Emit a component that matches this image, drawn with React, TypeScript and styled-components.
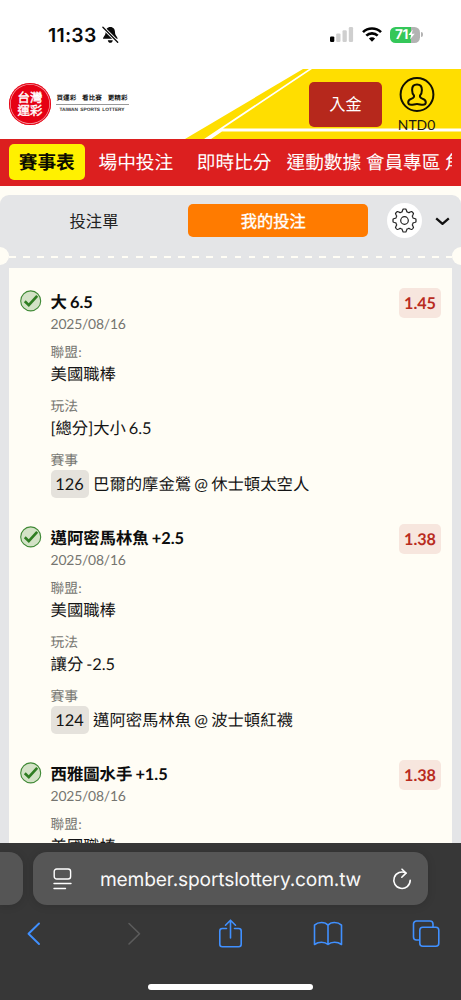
import React from "react";
import styled, { createGlobalStyle, css } from "styled-components";

const latin = `Lato, "Noto Sans CJK TC", sans-serif`;
const system = `Inter, "Noto Sans CJK TC", sans-serif`;

const GlobalStyle = createGlobalStyle`
  * { box-sizing: border-box; }
  html, body { margin: 0; padding: 0; background: #fff; }
  body { font-family: ${latin}; color: #111; overflow: hidden; text-rendering: geometricPrecision; }
  button { border: 0; padding: 0; margin: 0; background: none; font: inherit; color: inherit; }
  svg { display: block; flex: none; }
`;

const Screen = styled.div`
  width: 461px;
  height: 1000px;
  display: flex;
  flex-direction: column;
  overflow: hidden;
  background: #fffdf5;
`;

const StatusBar = styled.div`
  flex: none;
  height: 69px;
  display: flex;
  align-items: center;
  justify-content: space-between;
  padding: 0 38px 0 48px;
  background: #fff;
  font-family: ${system};
`;

const StatusGroup = styled.div<{ $gap: number }>`
  display: flex;
  align-items: center;
  gap: ${(p) => p.$gap}px;
`;

const Clock = styled.span`
  width: 50px;
  font-size: 19.4px;
  font-weight: 600;
  letter-spacing: 0.25px;
  line-height: 24px;
  white-space: nowrap;
  color: #0a0a0a;
`;

const Battery = styled.div`
  display: flex;
  align-items: center;
  gap: 1px;
`;

const BatteryBody = styled.div`
  width: 30px;
  height: 16px;
  border-radius: 5.5px;
  background: linear-gradient(90deg, #34c759 71%, #b3b3b3 71%);
  display: flex;
  align-items: center;
  justify-content: center;
  color: #fff;
  font-size: 13.5px;
  font-weight: 700;
  letter-spacing: -0.4px;
  line-height: 16px;
`;

const BatteryTip = styled.div`
  width: 2px;
  height: 5px;
  border-radius: 0 2px 2px 0;
  background: #b3b3b3;
`;

const Header = styled.header`
  position: relative;
  flex: none;
  height: 69.5px;
  display: flex;
  justify-content: space-between;
  padding: 0 26px 0 9px;
  background: #fff;
`;

const HeaderArt = styled.svg`
  position: absolute;
  inset: 0;
`;

const Brand = styled.div`
  position: relative;
  display: flex;
  align-items: center;
  gap: 4.5px;
`;

const Seal = styled.div`
  width: 42px;
  height: 42px;
  border-radius: 50%;
  background: #e60013;
  box-shadow: inset 0 0 0 1px #e60013, inset 0 0 0 1.7px #f6a0a6;
  color: #fff;
  display: grid;
  place-content: center;
  font-weight: 400;
  font-size: 12.4px;
  line-height: 12.6px;
  text-align: center;
  font-family: "Noto Sans CJK TC", sans-serif;
  -webkit-text-stroke: 0.4px #fff;
`;

const BrandText = styled.div`
  width: 73px;
  display: flex;
  flex-direction: column;
`;

const Slogan = styled.div`
  display: flex;
  justify-content: space-between;
  padding: 0 1px;
  font: 700 6.6px/9px "Noto Sans CJK TC", sans-serif;
  color: #111;
  height: 11.5px;
  border-bottom: 1px solid #999;
`;

const BrandEnglish = styled.div`
  padding-top: 1px;
  text-align: center;
  font: 700 4.8px/9px "Liberation Sans", sans-serif;
  white-space: nowrap;
  word-spacing: 1px;
  color: #333;
`;

const Account = styled.div`
  position: relative;
  display: flex;
  gap: 16px;
`;

const DepositButton = styled.button`
  width: 73px;
  height: 45px;
  margin-top: 12.5px;
  border-radius: 5px;
  background: #b6281c;
  color: #fff;
  font-size: 16.2px;
  font-weight: 400;
  line-height: 44px;
`;

const Profile = styled.div`
  width: 37px;
  display: flex;
  flex-direction: column;
  align-items: center;
  padding-top: 8px;
`;

const Balance = styled.span`
  margin-top: 3px;
  font-size: 13.9px;
  line-height: 18px;
  color: #1c1a10;
`;

const Nav = styled.nav`
  flex: none;
  height: 47px;
  display: flex;
  align-items: center;
  padding: 0 9px;
  background: #dc1f1f;
  overflow: hidden;
`;

const NavStrip = styled.div`
  display: flex;
  align-items: center;
  overflow: hidden;
  width: 100%;
`;

const NavItem = styled.a<{ $active?: boolean; $before?: number }>`
  flex: none;
  margin-left: ${(p) => p.$before ?? 0}px;
  color: #fff;
  font-size: 18.7px;
  font-weight: 400;
  line-height: 36px;
  white-space: nowrap;
  ${(p) =>
    p.$active &&
    css`
      width: 75.5px;
      text-align: center;
      border-radius: 5px;
      background: #fff100;
      color: #0c0c00;
      font-weight: 700;
    `}
`;

const Panel = styled.section`
  flex: 1;
  min-height: 0;
  margin-top: 9.5px;
  display: flex;
  flex-direction: column;
  border-radius: 9px 9px 0 0;
  background: #e4e5e7;
`;

const TabRow = styled.div`
  flex: none;
  height: 51px;
  display: flex;
  align-items: center;
`;

const Tab = styled.button<{ $active?: boolean }>`
  width: ${(p) => (p.$active ? 179.5 : 188)}px;
  height: 33px;
  border-radius: 5px;
  font-size: 16.3px;
  line-height: 32px;
  ${(p) =>
    p.$active
      ? css`
          padding-right: 9px;
          background: #ff7b00;
          color: #fff;
          -webkit-text-stroke: 0.35px #fff;
        `
      : css`
          color: #222;
        `}
`;

const SettingsButton = styled.button`
  width: 35px;
  height: 35px;
  margin-left: 19.5px;
  border-radius: 50%;
  background: #fff;
  display: grid;
  place-items: center;
`;

const CollapseButton = styled.button`
  margin-left: 13px;
  padding-top: 2px;
`;

const Perforation = styled.div`
  flex: none;
  height: 20px;
  display: flex;
  align-items: center;
  justify-content: space-between;
`;

const Notch = styled.div<{ $side: "left" | "right" }>`
  width: 9.3px;
  height: 18.6px;
  background: #fffdf5;
  border-radius: ${(p) => (p.$side === "left" ? "0 10px 10px 0" : "10px 0 0 10px")};
`;

const Dashes = styled.div`
  flex: 1;
  height: 2px;
  margin-top: 1px;
  background: repeating-linear-gradient(90deg, #fffdf5 0 6.6px, transparent 6.6px 14.1px);
`;

const BetList = styled.div`
  flex: 1;
  min-height: 0;
  margin: 2px 9.3px 0;
  padding-top: 22px;
  background: #fffdf5;
  overflow: hidden;
`;

const Bet = styled.article`
  height: 236px;
  display: flex;
  padding: 0 10.7px;
`;

const StatusMark = styled.div`
  width: 30.6px;
`;

const BetBody = styled.div`
  flex: 1;
  min-width: 0;
`;

const BetTitle = styled.div`
  font-size: 16.4px;
  font-weight: 700;
  letter-spacing: -0.05px;
  word-spacing: -0.8px;
  line-height: 25px;
  color: #0d0d0d;
`;

const BetDate = styled.div`
  margin-bottom: 9.5px;
  font-size: 13.9px;
  letter-spacing: -0.2px;
  line-height: 17.5px;
  color: #757570;
`;

const Field = styled.div`
  margin-bottom: 9px;
`;

const Label = styled.div`
  font-size: 13.8px;
  line-height: 19px;
  color: #777772;
`;

const Value = styled.div`
  height: 26px;
  font-size: 16.35px;
  line-height: 27px;
  word-spacing: -1.2px;
  letter-spacing: -0.03px;
  color: #141414;
  white-space: nowrap;
`;

const MatchLine = styled.div`
  display: flex;
  align-items: center;
  gap: 4.5px;
  margin-top: 0.5px;
  height: 28px;
  font-size: 16.35px;
  line-height: 28px;
  word-spacing: -1px;
  color: #141414;
  white-space: nowrap;
`;

const MatchNumber = styled.span`
  width: 38px;
  height: 28px;
  padding-top: 1px;
  border-radius: 5px;
  background: #e5e2dc;
  text-align: center;
`;

const Teams = styled.span`
  padding-top: 2px;
`;

const Odds = styled.div`
  width: 42px;
  height: 29.5px;
  margin-top: -2px;
  border-radius: 5px;
  background: #f7e6de;
  color: #b92b20;
  font-size: 16.2px;
  font-weight: 700;
  line-height: 31px;
  text-align: center;
`;

const BrowserChrome = styled.footer`
  flex: none;
  height: 157px;
  display: flex;
  flex-direction: column;
  align-items: center;
  padding-top: 9px;
  background: #373737;
`;

const AddressRow = styled.div`
  width: 100%;
  display: flex;
  gap: 10px;
`;

const PreviousTab = styled.div`
  width: 23px;
  height: 53px;
  border-radius: 0 14px 14px 0;
  background: #555;
  box-shadow: 0 1px 9px rgba(0, 0, 0, 0.13);
`;

const AddressBar = styled.div`
  width: 395px;
  height: 53px;
  display: flex;
  align-items: center;
  justify-content: space-between;
  padding: 0 16px 0 20px;
  border-radius: 14px;
  background: #565656;
  box-shadow: 0 1px 9px rgba(0, 0, 0, 0.13);
  color: #fff;
`;

const Address = styled.span`
  padding-right: 3px;
  font: 400 19.2px/26px ${system};
  letter-spacing: -0.17px;
  color: #f8f8f8;
  white-space: nowrap;
`;

const Toolbar = styled.div`
  width: 100%;
  height: 58px;
  padding: 0 21px 0 20px;
  display: flex;
  align-items: center;
  justify-content: space-between;
`;

const HomeIndicator = styled.div`
  width: 165px;
  height: 6px;
  margin-top: 21px;
  border-radius: 3px;
  background: #fff;
`;

const MutedBell = () => (
  <svg width="17" height="18" viewBox="0 0 17 18">
    <path d="M8.3 1C5.2 1 3.6 3.3 3.6 6.2 3.6 9.7 1 10.7 1 12.8h14.7c0-2.1-2.7-3.1-2.7-6.6C13 3.3 11.5 1 8.3 1Z" fill="#0a0a0a" />
    <path d="M5.8 14.2h5c-.4 1.8-1.3 2.6-2.5 2.6s-2.1-.8-2.5-2.6Z" fill="#0a0a0a" />
    <path d="m.9 1.3 14.8 14.9" stroke="#fff" strokeWidth="3.2" />
    <path d="m.9 1.3 14.8 14.9" stroke="#0a0a0a" strokeWidth="1.3" strokeLinecap="round" />
  </svg>
);

const Signal = () => (
  <svg width="24" height="16" viewBox="0 0 24 16">
    <rect x="0" y="9.4" width="4.3" height="5.6" rx="1.2" fill="#000" />
    <rect x="6.2" y="6.4" width="4.3" height="8.6" rx="1.2" fill="#cfcfcf" />
    <rect x="12.5" y="3.2" width="4.3" height="11.8" rx="1.2" fill="#cfcfcf" />
    <rect x="18.8" y="0" width="4.3" height="15" rx="1.2" fill="#cfcfcf" />
  </svg>
);

const Wifi = () => (
  <svg width="20" height="15" viewBox="0 0 20 15" fill="none" stroke="#000" strokeWidth="2.6">
    <path d="M1 5.2a12.8 12.8 0 0 1 18 0" />
    <path d="M4.3 8.7a8.1 8.1 0 0 1 11.4 0" />
    <path d="M10 14.8 6.9 11.6a4.4 4.4 0 0 1 6.2 0Z" fill="#000" stroke="none" />
  </svg>
);

const Bolt = () => (
  <svg width="7" height="11" viewBox="0 0 7 11">
    <path d="M4.8.5.4 6.1h2.7L2 10.5l4.7-5.7H3.8Z" fill="#fff" />
  </svg>
);

const ProfileIcon = () => (
  <svg width="36" height="36" viewBox="0 0 36 36" fill="none" stroke="#111000" strokeWidth="2">
    <circle cx="18" cy="17.5" r="16.4" />
    <path
      d="M18 7.600c-3.400 0-4.900 2.400-4.900 5.300 0 2.500.6 4.300 1.900 5.600.4 1.900-.5 2.500-2.300 3.100-2.300.8-3.500 1.700-3.500 3.600 0 1.800 1.300 2.600 3 2.600 2.200 0 3.500-.8 5.800-.8s3.600.8 5.800.8c1.700 0 3-.8 3-2.600 0-1.900-1.200-2.800-3.500-3.600-1.800-.6-2.700-1.200-2.300-3.100 1.300-1.300 1.900-3.100 1.900-5.600 0-2.900-1.500-5.300-4.900-5.300Z"
      strokeLinejoin="round"
    />
  </svg>
);

const gearPath = (() => {
  const points: string[] = [];
  const steps = 160;
  for (let i = 0; i < steps; i++) {
    const angle = (i / steps) * Math.PI * 2;
    const wave = Math.max(-1, Math.min(1, 1.65 * Math.cos(angle * 8)));
    const r = 10.2 + 1.3 * wave;
    points.push(`${(12.5 + r * Math.sin(angle)).toFixed(2)} ${(12.5 - r * Math.cos(angle)).toFixed(2)}`);
  }
  return `M${points.join("L")}Z`;
})();

const Gear = () => (
  <svg width="25" height="25" viewBox="0 0 25 25" fill="none" stroke="#222" strokeWidth="1.2" strokeLinejoin="round">
    <path d={gearPath} />
    <circle cx="12.5" cy="12.5" r="3.8" />
  </svg>
);

const WonIcon = () => (
  <svg width="22" height="22" viewBox="0 0 22 22" fill="none">
    <circle cx="10.7" cy="10.9" r="10" fill="#d3e2c6" stroke="#3f8935" strokeWidth="1.1" />
    <path d="m4.800 11.200 4 3.900 8.400-9.200" stroke="#2f7d22" strokeWidth="2.700" />
  </svg>
);

const bets = [
  { title: "大 6.5", odds: "1.45", play: "[總分]大小 6.5", no: "126", match: "巴爾的摩金鶯 @ 休士頓太空人" },
  { title: "邁阿密馬林魚 +2.5", odds: "1.38", play: "讓分 -2.5", no: "124", match: "邁阿密馬林魚 @ 波士頓紅襪" },
  { title: "西雅圖水手 +1.5", odds: "1.38", play: "", no: "", match: "" },
];

const toolStroke = {
  fill: "none",
  stroke: "#4090ff",
  strokeWidth: 1.6,
  strokeLinecap: "round" as const,
  strokeLinejoin: "round" as const,
};

export default function App() {
  return (
    <Screen>
      <GlobalStyle />
      <StatusBar>
        <StatusGroup $gap={4}>
          <Clock>11:33</Clock>
          <MutedBell />
        </StatusGroup>
        <StatusGroup $gap={8}>
          <Signal />
          <Wifi />
          <Battery>
            <BatteryBody>
              71
              <Bolt />
            </BatteryBody>
            <BatteryTip />
          </Battery>
        </StatusGroup>
      </StatusBar>

      <Header>
        <HeaderArt width="461" height="70" viewBox="0 0 461 70">
          <path d="M185 70 303 0H461V70Z" fill="#ffde00" />
          <path d="M204 70 309 0h3L223 59.500H461V62.600H222L211 70Z" fill="#fff" />
        </HeaderArt>
        <Brand>
          <Seal>
            <span>台灣</span>
            <span>運彩</span>
          </Seal>
          <BrandText>
            <Slogan>
              <span>買運彩</span>
              <span>看比賽</span>
              <span>更精彩</span>
            </Slogan>
            <BrandEnglish>TAIWAN SPORTS LOTTERY</BrandEnglish>
          </BrandText>
        </Brand>
        <Account>
          <DepositButton>入金</DepositButton>
          <Profile>
            <ProfileIcon />
            <Balance>NTD0</Balance>
          </Profile>
        </Account>
      </Header>

      <Nav>
        <NavStrip>
          <NavItem $active>賽事表</NavItem>
          <NavItem $before={14}>場中投注</NavItem>
          <NavItem $before={23.5}>即時比分</NavItem>
          <NavItem $before={15}>運動數據</NavItem>
          <NavItem $before={4.5}>會員專區</NavItem>
          <NavItem $before={4.5}>角</NavItem>
        </NavStrip>
      </Nav>

      <Panel>
        <TabRow>
          <Tab>投注單</Tab>
          <Tab $active>我的投注</Tab>
          <SettingsButton>
            <Gear />
          </SettingsButton>
          <CollapseButton>
            <svg width="15" height="9" viewBox="0 0 15 9" fill="none" stroke="#111" strokeWidth="2.300" strokeLinejoin="round">
              <path d="m1.200 1.300 6.300 5.500 6.300-5.500" />
            </svg>
          </CollapseButton>
        </TabRow>
        <Perforation>
          <Notch $side="left" />
          <Dashes />
          <Notch $side="right" />
        </Perforation>
        <BetList>
          {bets.map((bet) => (
            <Bet key={bet.title}>
              <StatusMark>
                <WonIcon />
              </StatusMark>
              <BetBody>
                <BetTitle>{bet.title}</BetTitle>
                <BetDate>2025/08/16</BetDate>
                <Field>
                  <Label>聯盟:</Label>
                  <Value>美國職棒</Value>
                </Field>
                {bet.play && (
                  <>
                    <Field>
                      <Label>玩法</Label>
                      <Value>{bet.play}</Value>
                    </Field>
                    <Label>賽事</Label>
                    <MatchLine>
                      <MatchNumber>{bet.no}</MatchNumber>
                      <Teams>{bet.match}</Teams>
                    </MatchLine>
                  </>
                )}
              </BetBody>
              <Odds>{bet.odds}</Odds>
            </Bet>
          ))}
        </BetList>
      </Panel>

      <BrowserChrome>
        <AddressRow>
          <PreviousTab />
          <AddressBar>
            <svg width="19" height="22" viewBox="0 0 19 22" fill="none" stroke="#fff" strokeWidth="1.400" strokeLinecap="round">
              <rect x="1.200" y="1" width="16.400" height="10" rx="2.500" />
              <path d="M1 15.500h17M1 20.500h11.500" />
            </svg>
            <Address>member.sportslottery.com.tw</Address>
            <svg width="20" height="22" viewBox="0 0 20 22" fill="none" stroke="#fff" strokeWidth="1.600" strokeLinecap="round" strokeLinejoin="round">
              <path d="M18.200 12.300A8.200 8.200 0 1 1 14 5.100" />
              <path d="M10 1.200 14 5.100 9.800 9.200" />
            </svg>
          </AddressBar>
        </AddressRow>
        <Toolbar>
          <svg width="28" height="28" viewBox="0 0 28 28" {...toolStroke} strokeWidth={1.900}>
            <path d="M19 3.500 8.500 13.800 19 24" />
          </svg>
          <svg width="28" height="28" viewBox="0 0 28 28" {...toolStroke} stroke="#5c5c5c">
            <path d="M11 3.500 21.500 13.800 11 24" />
          </svg>
          <svg width="28" height="30" viewBox="0 0 28 30" {...toolStroke}>
            <path d="M11.500 9.500H7.300a2.500 2.500 0 0 0-2.500 2.500v13.300a2.500 2.500 0 0 0 2.500 2.500h16.400a2.500 2.500 0 0 0 2.500-2.500V12a2.500 2.500 0 0 0-2.500-2.500H19.500" />
            <path d="M15.500 19V1.500M10.500 6.200l5-5 5 5" />
          </svg>
          <svg width="30" height="28" viewBox="0 0 30 28" {...toolStroke}>
            <path d="M15 5.200C13.500 3.300 11.200 2.500 8.500 2.500c-3 0-5 .8-7 2.700v19.300c2-1.500 4-2.300 7-2.300 2.700 0 5 .8 6.500 2.300 1.500-1.500 3.800-2.300 6.500-2.300 3 0 5 .8 7 2.300V5.200c-2-1.900-4-2.700-7-2.700-2.700 0-5 .8-6.500 2.700Zm0 0v19.300" />
          </svg>
          <svg width="28" height="28" viewBox="0 0 28 28" {...toolStroke}>
            <path d="M7.300 20H4.500A3 3 0 0 1 1.500 17V4a3 3 0 0 1 3-3H18a3 3 0 0 1 3 3v3" />
            <rect x="7.800" y="7.200" width="19" height="19" rx="3" />
          </svg>
        </Toolbar>
        <HomeIndicator />
      </BrowserChrome>
    </Screen>
  );
}
